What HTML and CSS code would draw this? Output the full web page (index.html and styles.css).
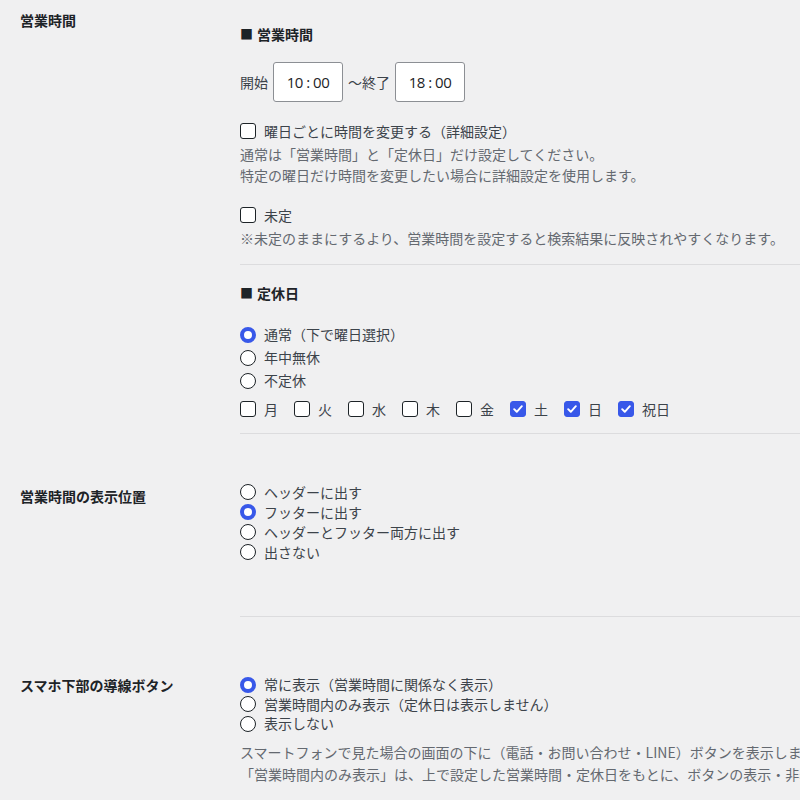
FILE: index.html
```html
<!DOCTYPE html>
<html lang="ja">
<head>
<meta charset="utf-8">
<title>営業時間設定</title>
<link rel="stylesheet" href="styles.css">
</head>
<body>
<div class="wrap">
  <div class="row row-hours">
    <div class="th">営業時間</div>
    <div class="td">
      <div class="sub-heading"><span class="sq">■</span>営業時間</div>
      <div class="time-row">
        <span>開始</span>
        <input class="time" type="text" value="10 : 00">
        <span>～終了</span>
        <input class="time" type="text" value="18 : 00">
      </div>
      <label class="opt opt-detail"><input type="checkbox"><span>曜日ごとに時間を変更する（詳細設定）</span></label>
      <p class="desc desc-tight">通常は「営業時間」と「定休日」だけ設定してください。<br>特定の曜日だけ時間を変更したい場合に詳細設定を使用します。</p>
      <label class="opt opt-undecided"><input type="checkbox"><span>未定</span></label>
      <p class="desc desc-tight">※未定のままにするより、営業時間を設定すると検索結果に反映されやすくなります。</p>
      <div class="sep sep-1"></div>
      <div class="sub-heading sub-heading-2"><span class="sq">■</span>定休日</div>
      <div class="radio-list radio-list-holiday">
        <label class="opt"><input type="radio" name="h" checked><span>通常（下で曜日選択）</span></label>
        <label class="opt"><input type="radio" name="h"><span>年中無休</span></label>
        <label class="opt"><input type="radio" name="h"><span>不定休</span></label>
      </div>
      <div class="days">
        <label class="opt day"><input type="checkbox"><span>月</span></label>
        <label class="opt day"><input type="checkbox"><span>火</span></label>
        <label class="opt day"><input type="checkbox"><span>水</span></label>
        <label class="opt day"><input type="checkbox"><span>木</span></label>
        <label class="opt day"><input type="checkbox"><span>金</span></label>
        <label class="opt day"><input type="checkbox" checked><span>土</span></label>
        <label class="opt day"><input type="checkbox" checked><span>日</span></label>
        <label class="opt day"><input type="checkbox" checked><span>祝日</span></label>
      </div>
      <div class="sep sep-2"></div>
    </div>
  </div>

  <div class="row row-position">
    <div class="th">営業時間の表示位置</div>
    <div class="td">
      <div class="radio-list radio-list-compact">
        <label class="opt"><input type="radio" name="p"><span>ヘッダーに出す</span></label>
        <label class="opt"><input type="radio" name="p" checked><span>フッターに出す</span></label>
        <label class="opt"><input type="radio" name="p"><span>ヘッダーとフッター両方に出す</span></label>
        <label class="opt"><input type="radio" name="p"><span>出さない</span></label>
      </div>
      <div class="sep sep-3"></div>
    </div>
  </div>

  <div class="row row-button">
    <div class="th">スマホ下部の導線ボタン</div>
    <div class="td">
      <div class="radio-list radio-list-compact">
        <label class="opt"><input type="radio" name="b" checked><span>常に表示（営業時間に関係なく表示）</span></label>
        <label class="opt"><input type="radio" name="b"><span>営業時間内のみ表示（定休日は表示しません）</span></label>
        <label class="opt"><input type="radio" name="b"><span>表示しない</span></label>
      </div>
      <p class="desc desc-wide">スマートフォンで見た場合の画面の下に（電話・お問い合わせ・LINE）ボタンを表示します。<br>「営業時間内のみ表示」は、上で設定した営業時間・定休日をもとに、ボタンの表示・非表示を切り替えます。</p>
    </div>
  </div>
</div>
</body>
</html>
```

FILE: styles.css
```css
* { box-sizing: border-box; }

html, body {
  margin: 0;
  padding: 0;
  background: #f0f0f1;
  overflow: hidden;
}

body {
  font-family: "Noto Sans CJK JP", "Noto Sans", sans-serif;
  font-size: 14px;
  line-height: 20px;
  color: #3c434a;
  width: 800px;
  height: 800px;
}

.wrap {
  display: flex;
  flex-direction: column;
}

.row {
  display: flex;
}

.th {
  flex: none;
  width: 220px;
  padding-left: 20px;
  font-weight: 700;
  color: #1d2327;
  line-height: 20px;
}

.td {
  flex: 1;
  min-width: 0;
  padding-left: 20px;
  display: flex;
  flex-direction: column;
  align-items: flex-start;
  overflow: hidden;
}

.row-hours .th { padding-top: 10px; }
.row-position .th { padding-top: 52px; }
.row-button .th { padding-top: 58px; }

.sub-heading {
  margin-top: 24px;
  font-weight: 700;
  color: #1d2327;
  display: flex;
  align-items: center;
}
.sub-heading-2 { margin-top: 18px; }

.sq {
  font-size: 13px;
  margin-right: 4px;
}

.time-row {
  margin-top: 18px;
  display: flex;
  align-items: center;
  gap: 5px;
  color: #3c434a;
}

.time {
  width: 70px;
  height: 40px;
  border: 1px solid #8c8f94;
  border-radius: 3px;
  background: #fff;
  font-family: "Open Sans", "Noto Sans", sans-serif;
  font-size: 15px;
  color: #1d2327;
  text-align: center;
  letter-spacing: -0.5px;
  padding: 0;
}

.opt {
  display: flex;
  align-items: center;
  gap: 8px;
  white-space: nowrap;
  color: #3c434a;
}

.opt-detail { margin-top: 19px; }
.opt-undecided { margin-top: 19px; }

.desc {
  margin: 0;
  color: #646970;
  white-space: nowrap;
  line-height: 21px;
}
.desc-tight { margin-top: 3px; }
.desc-wide { margin-top: 7px; line-height: 22px; }

.sep {
  align-self: stretch;
  height: 1px;
  background: #dcdcde;
}
.sep-1 { margin-top: 15px; }
.sep-2 { margin-top: 14px; }
.sep-3 { margin-top: 54px; }

.radio-list {
  display: flex;
  flex-direction: column;
}
.radio-list-holiday { margin-top: 20px; }
.radio-list-holiday .opt { line-height: 23px; }
.row-position .radio-list-compact { margin-top: 48px; }
.row-button .radio-list-compact { margin-top: 58px; }
.radio-list-compact .opt { line-height: 20px; }
.row-button .radio-list-compact .opt { line-height: 19.5px; }

.days {
  margin-top: 7px;
  display: flex;
}
.day { margin-right: 16px; }

input[type="checkbox"],
input[type="radio"] {
  -webkit-appearance: none;
  appearance: none;
  margin: 0;
  width: 16px;
  height: 16px;
  flex: none;
  background: #fff;
  border: 1px solid #1d2327;
}

input[type="checkbox"] {
  border-radius: 3px;
}

input[type="checkbox"]:checked {
  background-color: #3858e9;
  border-color: #3858e9;
  background-image: url("data:image/svg+xml,%3Csvg xmlns='http://www.w3.org/2000/svg' viewBox='0 0 16 16'%3E%3Cpath d='M3.6 8.2l3 3L12.4 4.8' fill='none' stroke='%23fff' stroke-width='2.2' stroke-linecap='round' stroke-linejoin='round'/%3E%3C/svg%3E");
  background-size: 14px 14px;
  background-position: center;
  background-repeat: no-repeat;
}

input[type="radio"] {
  border-radius: 50%;
}

input[type="radio"]:checked {
  border: 4.5px solid #3858e9;
  background: #fff;
}
```
